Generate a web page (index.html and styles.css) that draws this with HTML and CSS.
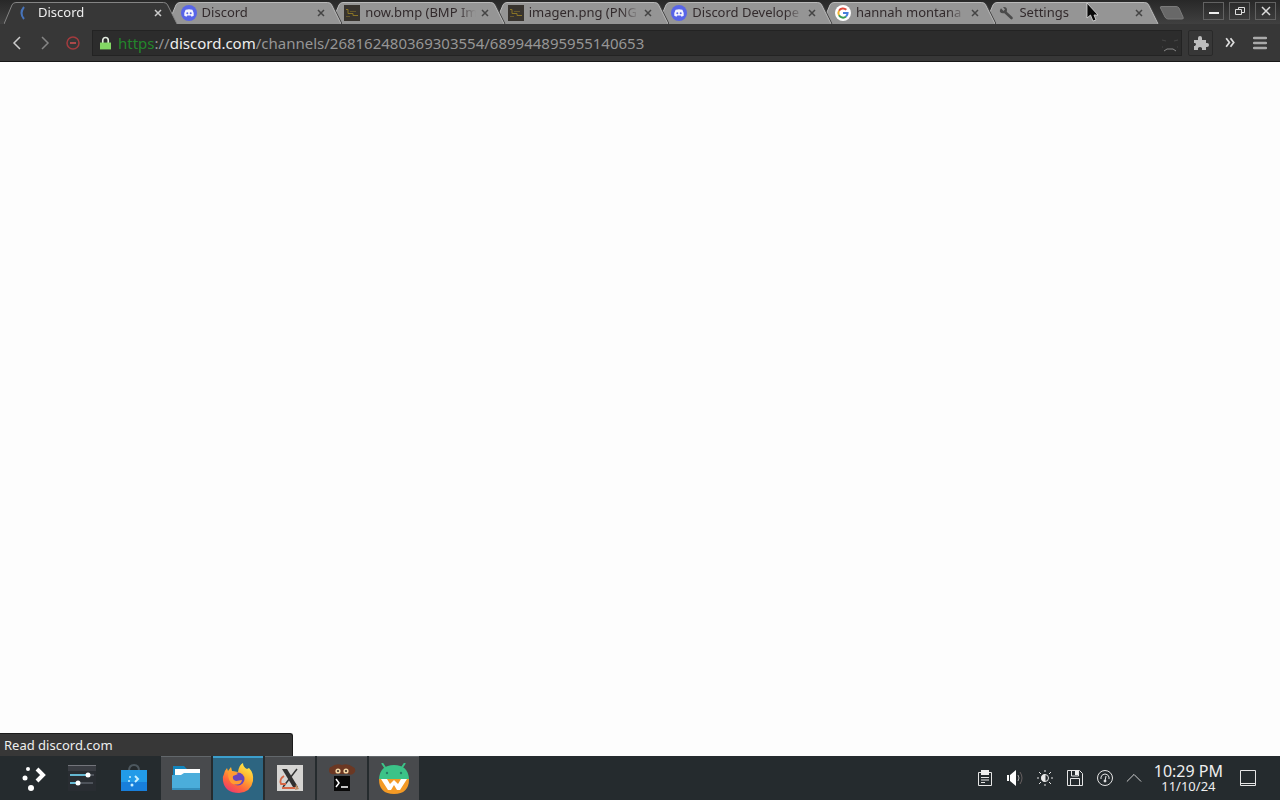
FILE: index.html
```html
<!DOCTYPE html>
<html lang="en">
<head>
<meta charset="utf-8">
<title>Discord</title>
<link rel="stylesheet" href="styles.css">
</head>
<body>
<svg class="defs" aria-hidden="true">
  <symbol id="shape" viewBox="0 0 174 22" preserveAspectRatio="none"><path d="M0 22 8 3Q9 .5 12 .5H160Q163 .5 164 3L173.500 22"/></symbol>
  <symbol id="discord" viewBox="0 0 16 16"><circle cx="8" cy="8" r="8" fill="#5865e8"/><path fill="#f4f4ff" d="M4.600 4.800Q8 3.600 11.400 4.800 13.200 8 12.700 10.800L10.500 11.800 9.700 10.600H6.300L5.500 11.800 3.300 10.800Q2.800 8 4.600 4.800Z"/><circle cx="6.300" cy="8.300" r="1" fill="#5865e8"/><circle cx="9.700" cy="8.300" r="1" fill="#5865e8"/></symbol>
  <symbol id="thumb" viewBox="0 0 16 16"><path fill="#37332e" d="M0 0h16v16H0z"/><path fill="none" stroke="#8a7425" d="M2 4.500h2v4h5v2h5"/><path fill="none" stroke="#65572b" d="M6 6.500h6M2 11.500h4"/></symbol>
</svg>
<header class="chrome">
  <div class="titlebar">
    <nav class="tabs" aria-label="Tabs">
      <div class="tab active"><svg class="shape"><use href="#shape"/></svg><svg class="icon spinner" viewBox="0 0 16 16"><path d="M7 2Q2 8 7 14" fill="none" stroke="#4774bb" stroke-width="2"/></svg><a href="#" class="label">Discord</a><button class="close" aria-label="Close tab"><svg viewBox="0 0 8 8"><path d="m1 1 6 6M7 1 1 7"/></svg></button></div>
      <div class="tab"><svg class="shape"><use href="#shape"/></svg><svg class="icon"><use href="#discord"/></svg><a href="#" class="label">Discord</a><button class="close" aria-label="Close tab"><svg viewBox="0 0 8 8"><path d="m1 1 6 6M7 1 1 7"/></svg></button></div>
      <div class="tab"><svg class="shape"><use href="#shape"/></svg><svg class="icon"><use href="#thumb"/></svg><a href="#" class="label">now.bmp (BMP Im</a><button class="close" aria-label="Close tab"><svg viewBox="0 0 8 8"><path d="m1 1 6 6M7 1 1 7"/></svg></button></div>
      <div class="tab"><svg class="shape"><use href="#shape"/></svg><svg class="icon"><use href="#thumb"/></svg><a href="#" class="label">imagen.png (PNG</a><button class="close" aria-label="Close tab"><svg viewBox="0 0 8 8"><path d="m1 1 6 6M7 1 1 7"/></svg></button></div>
      <div class="tab"><svg class="shape"><use href="#shape"/></svg><svg class="icon"><use href="#discord"/></svg><a href="#" class="label">Discord Develope</a><button class="close" aria-label="Close tab"><svg viewBox="0 0 8 8"><path d="m1 1 6 6M7 1 1 7"/></svg></button></div>
      <div class="tab"><svg class="shape"><use href="#shape"/></svg><svg class="icon" viewBox="0 0 16 16"><circle cx="8" cy="8" r="8" fill="#fff"/><g fill="none" stroke-width="2"><path stroke="#e14b3c" d="M4 5.700A4.600 4.600 0 0 1 11.300 4.800"/><path stroke="#efb32f" d="M4 5.700a4.600 4.600 0 0 0 0 4.600"/><path stroke="#3a9c55" d="M4 10.300a4.600 4.600 0 0 0 7 1.200"/><path stroke="#4680dc" d="M11 11.500Q12.600 10 12.600 8H8"/></g></svg><a href="#" class="label">hannah montana</a><button class="close" aria-label="Close tab"><svg viewBox="0 0 8 8"><path d="m1 1 6 6M7 1 1 7"/></svg></button></div>
      <div class="tab"><svg class="shape"><use href="#shape"/></svg><svg class="icon" viewBox="0 0 16 16"><path d="m7 7 6.500 6" stroke="#4b4b4b" stroke-width="2.600" stroke-linecap="round"/><path d="M3 3.300 5.500 6 7 4.500 5 2Q9 1.500 9 5T5 8.300 2 5Z" fill="#4b4b4b"/></svg><a href="#" class="label">Settings</a><button class="close" aria-label="Close tab"><svg viewBox="0 0 8 8"><path d="m1 1 6 6M7 1 1 7"/></svg></button></div>
    </nav>
    <button class="newtab" aria-label="New tab"><svg viewBox="0 0 26 14"><path d="M2 .5H17Q19 .5 20 2l4 9q1 2-1 2H9Q7 13 6 11L1.500 2Q1 .5 2 .5Z" fill="#686868" stroke="#7b7b7b"/></svg></button>
    <div class="window-buttons">
      <button aria-label="Minimize"><svg viewBox="0 0 20 16"><path d="M5 10h10" stroke="#eee" stroke-width="2"/></svg></button>
      <button aria-label="Restore"><svg viewBox="0 0 20 16"><path d="M8.500 6V4.500h6v5H12M5.500 6.500h6v5h-6z"/></svg></button>
      <button aria-label="Close"><svg viewBox="0 0 20 16"><path d="m6 4 8 8M14 4l-8 8" stroke-width="1.500"/></svg></button>
    </div>
  </div>
  <div class="toolbar">
    <button class="nav" aria-label="Back"><svg viewBox="0 0 16 16"><path d="m11 2-6 6 6 6" stroke="#ccc"/></svg></button>
    <button class="nav" aria-label="Forward"><svg viewBox="0 0 16 16"><path d="m5 2 6 6-6 6" stroke="#858585"/></svg></button>
    <button class="nav" aria-label="Stop"><svg viewBox="0 0 16 16"><circle cx="8" cy="8" r="6" stroke="#a33b3e"/><path d="M5 8h6" stroke="#d45252"/></svg></button>
    <div class="address">
      <svg class="lock" viewBox="0 0 12 14"><path d="M3 7V4a3 3 0 0 1 6 0v3" fill="none" stroke="#e3ece0" stroke-width="1.800"/><path d="M0 6.500h12V14H0z" fill="#83d765"/></svg>
      <a href="#" class="url"><span class="scheme">https</span>://<span class="host">discord.com</span>/channels/268162480369303554/689944895955140653</a>
      <button class="star" aria-label="Bookmark"><svg viewBox="0 0 18 20"><path d="M1 7l4 1M17 7l-4 1M1 14h1M16 14h1" stroke="#464646"/><path d="m3 18 3-2h6l3 2" stroke="#888"/></svg></button>
    </div>
    <button class="extension" aria-label="Extensions"><svg viewBox="0 0 16 16"><path fill="#bdbdbd" d="M1 5h4V3q0-2 2-2t2 2v2h4v3h1q2 0 2 2t-2 2h-1v3H9v-2q-2-2-4 0v2H1v-4h1q2-2 0-3H1Z"/></svg></button>
    <button class="more" aria-label="More tools"><svg viewBox="0 0 12 12"><path d="m2 2 3 4-3 4M6 2l3 4-3 4" stroke="#ddd" stroke-width="1.600"/></svg></button>
    <button class="menu" aria-label="Menu"><svg viewBox="0 0 14 14"><path d="M1 2h12M1 7h12M1 12h12" stroke="#aaa" stroke-width="2.400" stroke-linecap="round"/></svg></button>
  </div>
</header>
<main class="page"><div class="status">Read discord.com</div></main>
<footer class="taskbar">
  <div class="apps">
    <button aria-label="Application launcher"><svg viewBox="-3 0 32 32"><g fill="#fff"><circle cx="11" cy="7" r="2"/><circle cx="8" cy="16" r="2.500"/><circle cx="14" cy="26" r="3"/></g><path d="m20 7 6 6-6 6" fill="none" stroke="#fff" stroke-width="4"/></svg></button>
    <button aria-label="System settings"><svg viewBox="0 0 32 32"><path d="M2 3h28v26H2z" fill="#292d32"/><path d="M2 3h28v6H2z" fill="#3a3d43"/><path d="M2 3.500h28" stroke="#73757b"/><path d="M4 13h19M4 21h8" stroke="#65b8d2" stroke-width="2"/><path d="M14 21h13M24 13h4" stroke="#737881"/><circle cx="22" cy="13" r="2.500" fill="#fff"/><circle cx="12" cy="21" r="2.500" fill="#fff"/></svg></button>
    <button aria-label="Discover"><svg viewBox="0 0 32 32"><path d="M11 9Q11 3 16 3t5 6" fill="none" stroke="#4c575e" stroke-width="2"/><path d="M3 8h26v21H3Z" fill="#229be8"/><path d="M3 20h26v9H3z" fill="#187fdb"/><g fill="#c8efff"><circle cx="12" cy="15" r="1"/><circle cx="11" cy="19" r="1"/><circle cx="14" cy="23" r="1.500"/></g><path d="m17 14 3 3-3 3" fill="none" stroke="#c8efff" stroke-width="2"/></svg></button>
    <button class="open" aria-label="Files"><svg viewBox="0 0 32 32"><path d="M3 3h11l3 3h13v9H3Z" fill="#1385bd"/><path d="M5 6h25v8H5z" fill="#fff"/><path d="M2 12h9l3-2h16v17H2Z" fill="#4baddb"/><path d="M2 25h28v2H2Z" fill="#348dbb"/></svg></button>
    <button class="open current" aria-label="Firefox"><svg viewBox="0 1 32 32"><defs><linearGradient id="flame" x1=".8" y1="0" x2=".2" y2="1"><stop stop-color="#fff14b"/><stop offset=".4" stop-color="#ffad2e"/><stop offset=".7" stop-color="#ff653c"/><stop offset="1" stop-color="#e83478"/></linearGradient></defs><path fill="url(#flame)" d="M2 12Q3 8 5 6l1 3 3-4 1 4 6 1Q17 3 21 1q0 4 4 6l2-1q5 5 4 13-2 11-14 12Q3 31 1 19q-1-4 1-7Z"/><circle cx="16" cy="17" r="6.500" fill="#6845bb"/><path fill="#ff9b32" d="M6 10q6-2 10 2l-5 2q-1 4 3 5l6-1q-1 6-9 4-5-2-5-12Z"/></svg></button>
    <button class="open" aria-label="XTerm"><svg viewBox="0 1 32 32"><path d="M3 3h26v26H3z" fill="#d5d4d2"/><path d="m13 7 11 18h-5L8 7Z" fill="#303030"/><path d="M23 7 9 25" stroke="#333" stroke-width="1.500"/><path d="M10 14q-5 3-3 8h5M8 26h13" fill="none" stroke="#d66745" stroke-width="1.800"/><path d="m22 22 3 5-4 1Z" fill="#bc8d65"/></svg></button>
    <button class="open" aria-label="Terminal"><svg viewBox="0 1 32 32"><path d="M5 5Q10 1 16 3q6-2 11 2 3 1 2 5-3 4-6 2H9q-5 1-6-3 0-4 2-4Z" fill="#6b3823"/><circle cx="12" cy="9" r="2.600" fill="#f3d6a5"/><circle cx="20" cy="9" r="2.600" fill="#f3d6a5"/><circle cx="12" cy="9" r="1" fill="#2b211b"/><circle cx="20" cy="9" r="1" fill="#2b211b"/><path d="M8 14h16v15H8z" fill="#080808"/><path d="m10 17 3 4-3 4M15 25h7" fill="none" stroke="#fff" stroke-width="1.500"/></svg></button>
    <button class="open" aria-label="Waydroid"><svg viewBox="0 0 32 32"><path d="m8 6-4-6M23 6l4-6" stroke="#3bc388" stroke-width="2"/><path d="M1 16Q2 2 16 2t15 14Z" fill="#3bc388"/><circle cx="9" cy="10" r="1.200" fill="#267c66"/><circle cx="23" cy="10" r="1.200" fill="#267c66"/><path d="M1 16h30q0 15-15 15T1 16Z" fill="#f49a25"/><path d="M3 16h6l3 5 4-4 4 4 3-5h6l-7 11h-3l-3-5-3 5h-3Z" fill="#fff"/></svg></button>
  </div>
  <div class="tray">
    <button aria-label="Clipboard"><svg viewBox="0 0 18 18"><path d="M2.500 3.500h13v13h-13z"/><path d="M5 1h8v5H5z" fill="#eee" stroke="none"/><path d="M5 8.500h8M5 11h8M5 13.500h4"/></svg></button>
    <button aria-label="Volume"><svg viewBox="0 0 18 18"><path d="M1 6h2v6H1zM4 6l6-5v16l-6-5Z" fill="#fff" stroke="none"/><path d="M12 6q2 3 0 6" stroke="#aaa"/><path d="M14 3q4 6 0 12" stroke="#665f60"/></svg></button>
    <button aria-label="Brightness"><svg viewBox="0 0 18 18"><circle cx="9" cy="9" r="3.500"/><path d="M9 5.500v7A3.500 3.500 0 0 1 9 5.500Z" fill="#eee"/><path d="M9 1v2M9 15v2M1 9h2M15 9h2M3 3l2 2M13 13l2 2M3 15l2-2M13 5l2-2"/></svg></button>
    <button aria-label="Removable devices"><svg viewBox="0 0 18 18"><path d="M1.500 1.500h12l3 3v12h-15zM4.500 16V9.500h9V16M5.500 2v5h7V2"/><path d="M9 2h3v4H9z" fill="#eee" stroke="none"/></svg></button>
    <button aria-label="Performance"><svg viewBox="0 0 18 18"><circle cx="9" cy="9" r="7.500"/><path d="M5 10V8q1-3 4-3t4 3v2M10 7l-1 5"/><circle cx="9" cy="12" r="1" fill="#eee"/></svg></button>
    <button class="arrow" aria-label="Show hidden icons"><svg viewBox="0 0 18 18"><path d="m1 13 8-8 8 8"/></svg></button>
    <time class="clock"><span class="time">10:29 PM</span><span class="date">11/10/24</span></time>
    <button class="desktop" aria-label="Show desktop"><svg viewBox="0 0 18 18"><path d="M1.500 1.500h15v15h-15zM2 14.500h14"/></svg></button>
  </div>
</footer>
<svg class="cursor" viewBox="0 0 12 20" aria-hidden="true"><path d="M1 1v15l3.500-3L7 19l3-1-2-5h4Z" fill="#080808" stroke="#ddd" stroke-width=".8"/></svg>
</body>
</html>
```
FILE: styles.css
```css
* { box-sizing: border-box; }
body {
  margin: 0;
  min-height: 100vh;
  display: flex;
  flex-direction: column;
  background: #fdfdfd;
  font: 13px/18px "Noto Sans", sans-serif;
}
button {
  padding: 0;
  border: 0;
  background: none;
  display: flex;
  align-items: center;
  justify-content: center;
  flex: none;
}
svg { display: block; flex: none; }
a { color: inherit; text-decoration: none; }
.defs { position: absolute; width: 0; height: 0; }

.chrome { background: #373737; border-bottom: 1px solid #171717; }
.titlebar {
  height: 24px;
  padding: 2px 4px 0;
  display: flex;
  background: linear-gradient(#282828, #404040);
}
.tabs { flex: 1; min-width: 0; display: flex; }
.tab {
  position: relative;
  flex: 1 1 0;
  min-width: 0;
  height: 22px;
  display: flex;
  align-items: center;
  padding: 0 14px 1px 13px;
  color: #322a2c;
}
.tab + .tab { margin-left: -10px; }
.tab:nth-child(1) { z-index: 7; }
.tab:nth-child(2) { z-index: 6; }
.tab:nth-child(3) { z-index: 5; }
.tab:nth-child(4) { z-index: 4; }
.tab:nth-child(5) { z-index: 3; }
.tab:nth-child(6) { z-index: 2; }
.tab:nth-child(7) { z-index: 1; }
.shape {
  position: absolute;
  inset: 0;
  width: 100%;
  height: 100%;
  z-index: -1;
  fill: #959595;
  stroke: #bbb;
}
.tab:not(.active) .shape { filter: drop-shadow(1px 0 0 #444); }
.active { color: #eee; }
.active .shape { fill: #373737; stroke: #858585; }
.icon { width: 16px; height: 16px; }
.label {
  flex: 1;
  min-width: 0;
  height: 20px;
  line-height: 18px;
  margin: 0 3px 0 5px;
  overflow: hidden;
  white-space: nowrap;
  mask-image: linear-gradient(to right, #000 calc(100% - 18px), transparent);
}
.close { width: 12px; height: 16px; }
.close svg { width: 8px; height: 8px; stroke: #444; stroke-width: 1.5; }
.active .close svg { stroke: #ccc; }
.newtab { width: 26px; height: 22px; }
.newtab svg { width: 26px; height: 14px; }
.window-buttons { display: flex; gap: 5px; margin-left: 18px; }
.window-buttons button { width: 21px; height: 18px; border: 1px solid #626262; }
.window-buttons svg { width: 20px; height: 16px; fill: none; stroke: #ddd; }

.toolbar {
  height: 37px;
  padding: 0 11px 0 8px;
  display: flex;
  align-items: center;
}
.toolbar button svg { fill: none; }
.nav { width: 18px; height: 24px; margin-right: 10px; }
.nav svg { width: 16px; height: 16px; stroke-width: 1.5; }
.address {
  flex: 1;
  min-width: 0;
  height: 26px;
  display: flex;
  align-items: center;
  padding-left: 7px;
  background: #2c2c2c;
  border: 1px solid #232323;
}
.lock { width: 11px; height: 14px; margin-right: 7px; }
.url {
  flex: 1;
  min-width: 0;
  overflow: hidden;
  white-space: nowrap;
  color: #969696;
  font-size: 15px;
  line-height: 20px;
}
.scheme { color: #23862b; }
.host { color: #eee; }
.star { width: 22px; height: 24px; }
.star svg { width: 18px; height: 20px; }
.extension { width: 25px; height: 26px; margin-left: 6px; border: 1px solid #292929; border-radius: 2px; }
.extension svg { width: 16px; height: 16px; }
.more { width: 18px; height: 24px; margin-left: 8px; }
.more svg { width: 13px; height: 13px; }
.menu { width: 18px; height: 24px; margin-left: 12px; }
.menu svg { width: 14px; height: 14px; }

.page { flex: 1; display: flex; align-items: flex-end; }
.status {
  width: 293px;
  height: 23px;
  padding: 2px 4px;
  color: #eee;
  background: #373737;
  border: solid #1b1b1b;
  border-width: 1px 1px 0 0;
  border-radius: 0 3px 0 0;
}

.taskbar {
  height: 44px;
  padding: 0 23px 0 5px;
  display: flex;
  justify-content: space-between;
  background: #252b2e;
}
.apps { display: flex; gap: 2px; }
.apps button { width: 50px; height: 44px; }
.apps svg { width: 32px; height: 32px; }
.apps .open { background: #484a4d; border-top: 1px solid #62676b; }
.apps .current { background: #2d6581; border-top: 2px solid #3c9fcd; }
.tray { display: flex; align-items: center; gap: 12px; }
.tray svg { width: 18px; height: 18px; fill: none; stroke: #e5e5e5; }
.tray .arrow svg { width: 16px; height: 16px; }
.clock { display: flex; flex-direction: column; align-items: center; color: #eee; }
.time { font-size: 16px; line-height: 17px; }
.date { font-size: 13px; line-height: 13px; }
.desktop { margin-left: 4px; }
.cursor { position: absolute; left: calc(85% - 2px); top: 2px; width: 12px; height: 20px; z-index: 10; }
```
